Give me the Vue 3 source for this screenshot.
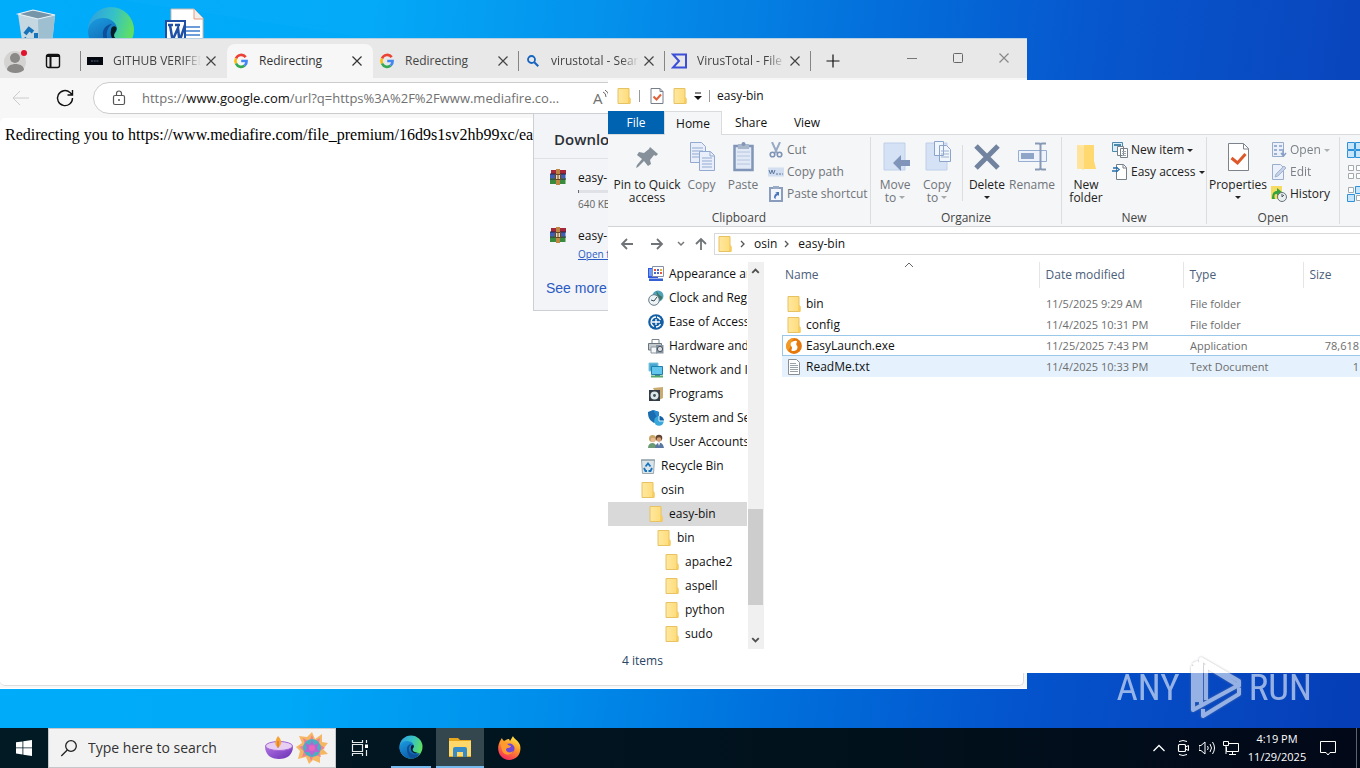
<script setup>
const tabs = [
  { icon: 'dark', title: 'GITHUB VERIFED', fade: true },
  { icon: 'google', title: 'Redirecting', active: true },
  { icon: 'google', title: 'Redirecting' },
  { icon: 'search', title: 'virustotal - Search', fade: true },
  { icon: 'vt', title: 'VirusTotal - File', fade: true },
]

const tree = [
  { icon: 'appearance', label: 'Appearance and', depth: 1 },
  { icon: 'clock', label: 'Clock and Region', depth: 1 },
  { icon: 'ease', label: 'Ease of Access', depth: 1 },
  { icon: 'hardware', label: 'Hardware and S', depth: 1 },
  { icon: 'network', label: 'Network and Int', depth: 1 },
  { icon: 'programs', label: 'Programs', depth: 1 },
  { icon: 'shield', label: 'System and Sec', depth: 1 },
  { icon: 'users', label: 'User Accounts', depth: 1 },
  { icon: 'recycle', label: 'Recycle Bin', depth: 0 },
  { icon: 'folder', label: 'osin', depth: 0 },
  { icon: 'folder', label: 'easy-bin', depth: 1, selected: true },
  { icon: 'folder', label: 'bin', depth: 2 },
  { icon: 'folder', label: 'apache2', depth: 3 },
  { icon: 'folder', label: 'aspell', depth: 3 },
  { icon: 'folder', label: 'python', depth: 3 },
  { icon: 'folder', label: 'sudo', depth: 3 },
]

const files = [
  { icon: 'folder', name: 'bin', date: '11/5/2025 9:29 AM', type: 'File folder', size: '' },
  { icon: 'folder', name: 'config', date: '11/4/2025 10:31 PM', type: 'File folder', size: '' },
  { icon: 'exe', name: 'EasyLaunch.exe', date: '11/25/2025 7:43 PM', type: 'Application', size: '78,618', state: 'focused' },
  { icon: 'txt', name: 'ReadMe.txt', date: '11/4/2025 10:33 PM', type: 'Text Document', size: '1', state: 'hovered' },
]
</script>

<template>
  <svg class="defs" aria-hidden="true">
    <defs>
      <linearGradient id="gFolder" x1="0" x2="1"><stop offset="0" stop-color="#ffe8a0" /><stop offset="1" stop-color="#ffdb76" /></linearGradient>
      <linearGradient id="gEdgeTop" x1="0" x2="1" y1="0.2" y2="0.5"><stop offset="0" stop-color="#2f9fe0" /><stop offset="0.5" stop-color="#35c1c8" /><stop offset="1" stop-color="#62e25c" /></linearGradient>
      <linearGradient id="gEdgeLow" x1="0" x2="0.6" y1="0" y2="1"><stop offset="0" stop-color="#1b9de2" /><stop offset="1" stop-color="#0c59a4" /></linearGradient>
      <linearGradient id="gFox" x1="0.8" x2="0.3" y1="0" y2="1"><stop offset="0" stop-color="#fff04a" /><stop offset="0.45" stop-color="#ff9528" /><stop offset="1" stop-color="#f6265e" /></linearGradient>
      <linearGradient id="gBowl" x1="0" x2="1" y1="0" y2="1"><stop offset="0" stop-color="#b77be8" /><stop offset="1" stop-color="#6a2fb4" /></linearGradient>

      <symbol id="folder" viewBox="0 0 16 16"><path d="M2 .5h11v9.500h1V15.500H2z" fill="url(#gFolder)" stroke="#e7c262" /><path d="M12.500 9.500 14.500 11v4.500H12z" fill="#f7cc5c" /></symbol>
      <symbol id="doccheck" viewBox="0 0 16 16"><path d="M2 .5h9l3 3v12H2z" fill="#fff" stroke="#767e8a" /><path d="M11 .5v3h3" fill="none" stroke="#767e8a" /><path d="m4.500 8.500 3 3 4.500-5" fill="none" stroke="#e0603a" stroke-width="2" /></symbol>
      <symbol id="google" viewBox="0 0 16 16"><g fill="none" stroke-width="2.600"><path d="M12.700 4.100A5.600 5.600 0 0 0 3 5.500" stroke="#ea4335" /><path d="M3 5.500a5.600 5.600 0 0 0 0 5" stroke="#fbbc05" /><path d="M3 10.500a5.600 5.600 0 0 0 8.700 2" stroke="#34a853" /><path d="M8.200 8h5.400a5.600 5.600 0 0 1-1.900 4.500" stroke="#4285f4" /></g></symbol>
      <symbol id="dark" viewBox="0 0 16 16"><rect y="4" width="16" height="8" fill="#05080e" /><path d="M4 8h8" stroke="#3d4960" stroke-width="1.500" stroke-dasharray="2 .7" /></symbol>
      <symbol id="search" viewBox="0 0 16 16"><circle cx="6.500" cy="6.500" r="3.500" fill="none" stroke="#1764c0" stroke-width="1.800" /><path d="m9.300 9.300 4 4" stroke="#1764c0" stroke-width="2" /></symbol>
      <symbol id="vt" viewBox="0 0 16 16"><path d="M2 1.500h13v13H2L8 8z" fill="none" stroke="#3b4fd8" stroke-width="2" /></symbol>
      <symbol id="x" viewBox="0 0 16 16"><path d="m3.500 3.500 9 9m0-9-9 9" stroke="currentColor" stroke-width="1.200" fill="none" /></symbol>
      <symbol id="plus" viewBox="0 0 16 16"><path d="M8 1.500v13M1.500 8h13" stroke="currentColor" stroke-width="1.200" fill="none" /></symbol>
      <symbol id="rar" viewBox="0 0 18 18"><path d="M2 2h15v4H2z" fill="#a5283a" /><path d="M1 6h15.500v4.500H1z" fill="#3f5fb4" /><path d="M1 10.500h15.500V16H1z" fill="#398a3c" /><path d="M1 6h16M1 11h16" stroke="#252744" /><path d="M7 1h4v16H7z" fill="#bd8642" /><path d="M6.500 6.500h5v5h-5z" fill="#ead9b4" stroke="#6a4420" /><path d="M9 7v4" stroke="#6a4420" /></symbol>
      <symbol id="appearance" viewBox="0 0 16 16"><path d="M0 2h10v10H0z" fill="#3156df" /><path d="M1 3h5v7H1z" fill="#6f9bf2" /><path d="M4.500.500h11v10h-11z" fill="#fff" stroke="#8791a5" /><path d="M6 3h2v2H6zm6 3h2v2h-2z" fill="#ee5437" /><path d="M9 3h2v2H9zM6 6h2v2H6zm3 0h2v2H9z" fill="#4568cf" /><path d="M12 3h2v2h-2z" fill="#e7b529" /><path d="M1 12.500h14V15H1z" fill="#345fd5" /></symbol>
      <symbol id="clock" viewBox="0 0 16 16"><circle cx="10" cy="6" r="5.500" fill="#4fa3b8" /><path d="M8 1c3 2 2 4 5 5s0 4-2 5" fill="#3f7564" /><circle cx="6" cy="10" r="5.300" fill="#edf2f4" stroke="#667b89" /><path d="m3 10 3 1 3-4" fill="none" stroke="#334956" /></symbol>
      <symbol id="ease" viewBox="0 0 16 16"><circle cx="8" cy="8" r="7.800" fill="#125fa6" /><path d="M8 3a5 5 0 0 0-2 9.500M9 3a5 5 0 0 1 3.500 3M8 13a5 5 0 0 0 4.500-3M4 8h8M8 5v6" fill="none" stroke="#fff" stroke-width="1.300" /></symbol>
      <symbol id="hardware" viewBox="0 0 16 16"><path d="M4 1.500h7v4H4z" fill="#fff" stroke="#79838d" /><path d="M.5 5.500h13V12H.5z" fill="#c4cbd0" stroke="#69747f" /><path d="M3 9h6v6H3z" fill="#f5f7f8" stroke="#8b959e" /><path d="M8 7h7.500v8.500H8z" fill="#8894a0" /><circle cx="12" cy="11" r="2.600" fill="#d9e0e5" stroke="#48535d" /></symbol>
      <symbol id="network" viewBox="0 0 16 16"><path d="M1 1h9v8H1z" fill="#48a8d2" stroke="#7ec7df" /><path d="M3.500 4.500h11v8h-11z" fill="#62c6ec" stroke="#1f7fae" /><path d="M7 12.500h5v1.500H7z" fill="#337799" /><path d="M3 14.500h12" stroke="#55a869" stroke-width="2" /></symbol>
      <symbol id="programs" viewBox="0 0 16 16"><path d="M5 2 15 1v11l-4 2z" fill="#c9aa70" /><path d="M1 4h11v11H1z" fill="#333c45" /><circle cx="6.500" cy="9.500" r="4" fill="#dde6e9" /><circle cx="6.500" cy="9.500" r="1.400" fill="#3c525c" /></symbol>
      <symbol id="shield" viewBox="0 0 16 16"><path d="m0 2 5-2 6 2c0 6-1 8-5 11C1 10 0 7 0 2" fill="#196caf" /><path d="m5 0 6 2c0 4 0 5-1 7z" fill="#2688d0" /><circle cx="11" cy="11" r="4.800" fill="#38a8da" /><path d="M11 6v5h5a5 5 0 0 0-5-5" fill="#1561a3" /><path d="M11 6v5h5" fill="none" stroke="#ddf4ff" /></symbol>
      <symbol id="users" viewBox="0 0 16 16"><circle cx="4.500" cy="4.500" r="3.500" fill="#c8a566" /><circle cx="5" cy="6" r="2.300" fill="#e9bd91" /><path d="M0 14c0-6 8-7 9 0z" fill="#6c9a73" /><circle cx="11" cy="4" r="3.300" fill="#604331" /><circle cx="11" cy="5.500" r="2.300" fill="#d79e75" /><path d="M7 14c1-7 8-7 9 0z" fill="#5a76a3" /><path d="m10 9 1 3 1-3" fill="#fff" /></symbol>
      <symbol id="recycle" viewBox="0 0 16 16"><path d="m1.500 2 1 13.500h11l1-13.500z" fill="#dbe4e8" stroke="#9aa9b2" /><path d="M1 2h14" stroke="#84939c" /><path d="m5.500 8.500 2.500-3 2.500 3M12 10l-1.500 3h-2M4 10l1.500 3H7" fill="none" stroke="#1673bf" stroke-width="1.800" /></symbol>
      <symbol id="exe" viewBox="0 0 16 16"><circle cx="8" cy="8" r="7.900" fill="#e5780c" /><path d="M8 .2a7.800 7.800 0 0 0-6 12.700L5 8l1-5z" fill="#f29a24" /><path d="M9.500 2.800C6 3 4.200 5 4.800 7.300c.3 1.200 1.500 1.600 1.200 2.700-.2 1-.7 2-.3 3 4 .5 6-1.500 5.800-4-.1-1.500-1.300-1.700-1.200-2.700.1-1.300.6-2 .8-3z" fill="#fff" /></symbol>
      <symbol id="txt" viewBox="0 0 16 16"><path d="M2.500.500h8l3 3v12h-11z" fill="#fff" stroke="#8b8f94" /><path d="M4 4.500h6M4 6.500h8M4 8.500h8M4 10.500h8M4 12.500h8" stroke="#9aa2a9" /></symbol>
      <symbol id="edge" viewBox="0 0 48 48"><circle cx="24" cy="24" r="23" fill="url(#gEdgeTop)" /><path d="M1 25C2 16 9 12 16 12c9 0 14 6 14 11 0 3-3 4-3 7 0 5 7 8 15 6-4 7-11 11-18 11C11 47 1 37 1 25" fill="url(#gEdgeLow)" /><path d="M16 29c-1-6 4-11 9-11-4 3-6 8-5 13s8 11 21 8c-4 5-9 8-15 8-6-3-10-11-10-18" fill="#0d4f9b" /><path d="M24 24c0-3 3-5 5-3 2 3-2 5-2 9 1 4 7 5 11 5-8 4-16-2-14-11" fill="#041c24" /></symbol>
    </defs>
  </svg>

  <main class="desktop">
    <svg class="wall" viewBox="0 0 1360 768" preserveAspectRatio="none" aria-hidden="true">
      <path d="M120 0 1360 190V0z" fill="#fff" opacity=".015" />
    </svg>
    <div class="shortcuts">
      <svg class="desk-icon" viewBox="0 0 48 48" aria-label="Recycle Bin"><path d="M6 8 21 4l22 5-4 39H12z" fill="#c5d8e2" /><path d="m26 13 17-4-4 39H27z" fill="#9dbfd0" /><path d="M6 8 21 4l22 5-17 4z" fill="#7695a8" stroke="#e8f1f6" stroke-width="1.200" /><path d="m13 28 4-5 4 3m3 1 0 6m-8 4-4-5" fill="none" stroke="#1673ba" stroke-width="4" /></svg>
      <svg class="desk-icon" aria-label="Edge"><use href="#edge" /></svg>
      <svg class="desk-icon" viewBox="0 0 48 48" aria-label="Word"><path d="M9 3h23l9 9v36H9z" fill="#fff" stroke="#c9b9b3" /><path d="M32 3v10h9" fill="#eee" stroke="#e89a7b" /><path d="M24 21h14M24 25h14M24 29h14" stroke="#3d7dcb" stroke-width="1.500" /><path d="M4 15h19v26H4z" fill="#fff" stroke="#1e50a6" stroke-width="2" /><path d="m8 19 2 12h2l4-9 1 9h2l4-12M6 19h5m2 0h5" fill="none" stroke="#1e50a6" stroke-width="2.500" /></svg>
    </div>

    <section class="browser" aria-label="Browser">
      <div class="tabbar">
        <div class="profile">
          <svg viewBox="0 0 30 30"><circle cx="15" cy="16" r="11" fill="#d5d3d2" /><circle cx="15" cy="12" r="5" fill="#8b8988" /><path d="M7 24c0-8 17-8 17 0-4 4-13 4-17 0" fill="#8b8988" /><circle cx="24" cy="7" r="3" fill="#e3122d" /></svg>
        </div>
        <svg class="tabmenu" viewBox="0 0 16 16"><rect x="1.500" y="1.500" width="13" height="13" rx="2" fill="none" stroke="#111" stroke-width="1.400" /><path d="M2 3h12M5.500 3v11" stroke="#111" stroke-width="2" /></svg>
        <div v-for="(t, i) in tabs" :key="i" class="tab" :class="{ active: t.active, fade: t.fade, before: i === 0 }">
          <svg class="fav"><use :href="'#' + t.icon" /></svg>
          <span>{{ t.title }}</span>
          <button aria-label="Close tab"><svg><use href="#x" /></svg></button>
        </div>
        <button class="newtab" aria-label="New tab"><svg><use href="#plus" /></svg></button>
        <div class="winctl">
          <button aria-label="Minimize"><svg viewBox="0 0 16 16"><path d="M3 8.500h10" stroke="#777" /></svg></button>
          <button aria-label="Maximize"><svg viewBox="0 0 16 16"><rect x="3.500" y="3.500" width="9" height="9" rx="1" fill="none" stroke="#666" /></svg></button>
          <button aria-label="Close"><svg><use href="#x" /></svg></button>
        </div>
      </div>
      <div class="toolbar">
        <button class="back" aria-label="Back"><svg viewBox="0 0 20 20"><path d="M18 10H2m7-7-7 7 7 7" fill="none" stroke="currentColor" /></svg></button>
        <button class="reload" aria-label="Refresh"><svg viewBox="0 0 20 20"><path d="M17.500 10A7.500 7.500 0 1 1 15 4.500L17 6.500M17.500 2v5h-5" fill="none" stroke="currentColor" stroke-width="1.400" /></svg></button>
        <div class="address">
          <svg class="lock" viewBox="0 0 16 16"><rect x="2.500" y="5.500" width="11" height="9" rx="1.500" fill="none" stroke="#555" stroke-width="1.200" /><path d="M5.500 5V3.500a2.500 2.500 0 0 1 5 0V5" fill="none" stroke="#555" stroke-width="1.200" /><circle cx="8" cy="10" r="1" fill="#555" /></svg>
          <p>https://<b>www.google.com</b>/url?q=https%3A%2F%2Fwww.mediafire.co...</p>
          <span class="aloud">A<svg viewBox="0 0 8 10"><path d="M0 2q3 1 3 5M2 0q4 2 4 7" fill="none" stroke="#666" /></svg></span>
        </div>
      </div>
      <div class="page">Redirecting you to https://www.mediafire.com/file_premium/16d9s1sv2hb99xc/ea</div>
      <aside class="downloads">
        <h2>Downloads</h2>
        <div class="dl"><svg><use href="#rar" /></svg><div><p>easy-</p><i class="bar"></i><small>640 KB</small></div></div>
        <div class="dl"><svg><use href="#rar" /></svg><div><p>easy-</p><a href="#">Open file</a></div></div>
        <a class="more" href="#">See more</a>
      </aside>
    </section>

    <section class="explorer" aria-label="easy-bin">
      <header class="titlebar">
        <svg class="i16"><use href="#folder" /></svg><i class="sep"></i>
        <svg class="i16"><use href="#doccheck" /></svg><svg class="i16 qa"><use href="#folder" /></svg>
        <svg class="drop" viewBox="0 0 8 8"><path d="M1 1h6" stroke="#111" /><path d="M0 4h8L4 8z" fill="#111" /></svg><i class="sep tight"></i>
        <span>easy-bin</span>
      </header>
      <nav class="rtabs">
        <button class="file">File</button><button class="home">Home</button><button class="share">Share</button><button class="view">View</button>
      </nav>
      <div class="ribbon">
        <div class="group clip">
          <div class="tools">
            <button class="big pin"><svg viewBox="0 0 32 32"><path d="m19 6 8 7-2 2-2-1-4 5 1 4-3 2-4-5-6 6-2 1 1-3 5-6-5-4 2-3 5 1 5-4z" fill="#85909a" /></svg>Pin to Quick<br>access</button>
            <button class="big off copy"><svg viewBox="0 0 32 32"><g fill="#e8effb" stroke="#93a9cf"><path d="M4.500 1.500h11l4 4v16h-15z" /><path d="M6 7h11M6 10h11M6 13h11M6 16h11" /><path d="M13.500 10.500h11l4 4v15h-15z" /><path d="M24 11v4h4M16 17h10M16 20h10M16 23h10M16 26h10" /></g></svg>Copy</button>
            <button class="big off paste"><svg viewBox="0 0 32 32"><path d="M7.500 5h18v24h-18z" fill="#e2e9f6" stroke="#8195b8" stroke-width="2.500" /><path d="M10 11h13M10 15h13M10 19h13M10 23h13" stroke="#b4c4df" /><path d="M11 3h11v5H11z" fill="#a8b6cc" /><circle cx="16.500" cy="3" r="2" fill="#8195b8" /></svg>Paste</button>
            <div class="small off">
              <button><svg viewBox="0 0 16 16"><path d="m4 0 5 11M12 0 7 11" stroke="#97a9c4" stroke-width="2" /><g fill="none" stroke="#7f94b5" stroke-width="1.600"><circle cx="4.500" cy="12.500" r="2.300" /><circle cx="11.500" cy="12.500" r="2.300" /></g></svg>Cut</button>
              <button><svg viewBox="0 0 16 16"><path d="M0 3.500h16v9H0z" fill="#d3dff1" /><path d="m1 6 1.500 4L4 6l1.500 4L7 6" fill="none" stroke="#5b789f" /><path d="M8 10h7" stroke="#5b789f" stroke-dasharray="2 1" /></svg>Copy path</button>
              <button><svg viewBox="0 0 16 16"><path d="M2 2h12v13H2z" fill="#f3f7fd" stroke="#8a9dbd" stroke-width="2" /><path d="M5 0h6v3H5z" fill="#9aabc6" /><path d="M6 12c0-3 1-4 3-5L7 6h4v4l-1-1c-2 1-3 2-2 4z" fill="#4776ba" /></svg>Paste shortcut</button>
            </div>
          </div>
          <p>Clipboard</p>
        </div>
        <div class="group org">
          <div class="tools">
            <button class="big off move"><svg viewBox="0 0 32 32"><path d="M5 2h21v27H5z" fill="#d5e1f5" stroke="#c0d0ea" /><path d="M31 19h-9v-5l-8 8 8 8v-5h9z" fill="#8095b9" /></svg>Move<br>to <i></i></button>
            <button class="big off dup"><svg viewBox="0 0 32 32"><path d="M5 2h21v27H5z" fill="#d5e1f5" stroke="#c0d0ea" /><path d="M13.500.5h9v14h-9zM18.500 4.500h7l4 4v12h-11z" fill="#f1f5fc" stroke="#8ca4ca" /><path d="M20 10h8M20 13h8M20 16h8" stroke="#9db1d2" /></svg>Copy<br>to <i></i></button>
            <u></u>
            <button class="big del"><svg viewBox="0 0 32 32"><path d="m5 5 22 22m0-22L5 27" stroke="#71839e" stroke-width="5" /></svg>Delete<br><i></i></button>
            <button class="big off ren"><svg viewBox="0 0 32 32"><path d="M2.500 9.500h28v11h-28z" fill="#eef3fb" stroke="#97aed3" /><path d="M5 12h13v6H5z" fill="#8fa5c8" /><path d="M24.500 3v25M19 2.500h4q1.500 0 1.500 2 0-2 1.500-2h4M19 28.500h4q1.500 0 1.500-2 0 2 1.500 2h4" fill="none" stroke="#8799b5" stroke-width="2" /></svg>Rename</button>
          </div>
          <p>Organize</p>
        </div>
        <div class="group new">
          <div class="tools">
            <button class="big fold"><svg viewBox="0 0 32 32"><path d="M7 4h14v24H7z" fill="#ffe7a1" /><path d="M14 4h10v16l2 8H14z" fill="#ffd86f" /><path d="m7 4 7 3v22l-7-3z" fill="#ffe39a" /></svg>New<br>folder</button>
            <div class="small">
              <button><svg viewBox="0 0 16 16"><path d="M.5.500h10v9H.500z" fill="#dceefb" stroke="#4b89af" /><path d="M2 3h7" stroke="#4b89af" stroke-width="2" /><path d="M5.500 4.500h6v9h-6zM8.500 6.500h7v9h-7z" fill="#fff" stroke="#777f87" /><path d="M10 9.500h4M10 11.500h4M10 13.500h4" stroke="#9da4aa" /></svg>New item<i></i></button>
              <button><svg viewBox="0 0 16 16"><path d="M4.500.500h7l3 3v12h-10z" fill="#fff" stroke="#777f87" /><path d="M11 .5v3.500h3.500" fill="none" stroke="#777f87" /><path d="M1 4h5M0 7h6M4 3l3 2.500L4 8" stroke="#2770ab" fill="none" stroke-width="1.500" /></svg>Easy access<i></i></button>
            </div>
          </div>
          <p>New</p>
        </div>
        <div class="group open">
          <div class="tools">
            <button class="big"><svg viewBox="0 0 32 32"><path d="M6.500 2.500h15l5 5v22h-20z" fill="#fff" stroke="#7c838b" /><path d="M21.500 3v5h5" fill="none" stroke="#7c838b" /><path d="m9.500 17 6 5 8-9" fill="none" stroke="#dd592c" stroke-width="3" /></svg>Properties<br><i></i></button>
            <div class="small">
              <button class="off"><svg viewBox="0 0 16 16"><path d="M1.500.500h11v14h-11z" fill="#eaf0fb" stroke="#8fa4c8" /><path d="M3 3h3v2H3zm0 4h3v2H3zm0 4h3v2H3z" fill="#93a9cd" /><path d="M8 4h3M8 8h3M12 7v6M10 11l2.500 3L15 11" stroke="#7e96c1" stroke-width="1.500" fill="none" /></svg>Open<i></i></button>
              <button class="off"><svg viewBox="0 0 16 16"><path d="M1.500.500h8l3 3v12h-11z" fill="#eaf0fb" stroke="#91a6c9" /><path d="m4 13 1-3 8-8 2 2-8 8z" fill="#bfcee6" stroke="#9cafcf" /></svg>Edit</button>
              <button><svg viewBox="0 0 16 16"><path d="M0 0h11v13H0z" fill="#f6db62" /><path d="M1 13c0-6 2-8 5-8V2l5 4-5 4V8c-3 0-3 2-2 5z" fill="#36a43c" /><circle cx="11" cy="11" r="4.500" fill="#e9eeef" stroke="#66727a" /><path d="M11 8v3l2-2" stroke="#4b5960" fill="none" /></svg>History</button>
            </div>
          </div>
          <p>Open</p>
        </div>
        <div class="group select">
          <svg viewBox="0 0 16 16"><path d="M.5.500h7v7h-7zm8 0h7v7h-7zm-8 8h7v7h-7zm8 0h7v7h-7z" fill="#c7e6fc" stroke="#2f91d8" /></svg>
          <svg viewBox="0 0 16 16"><path d="M1.500 1.500h5v5h-5zm8 0h5v5h-5zm-8 8h5v5h-5zm8 0h5v5h-5z" fill="#fff" stroke="#a4a9ad" /></svg>
          <svg viewBox="0 0 16 16"><path d="M1.500 1.500h5v5h-5zm8 8h5v5h-5z" fill="#fff" stroke="#a4a9ad" /><path d="M8.500.500h7v7h-7zm-8 8h7v7h-7z" fill="#c7e6fc" stroke="#2f91d8" /></svg>
        </div>
      </div>
      <div class="navrow">
        <button aria-label="Back"><svg viewBox="0 0 16 16"><path d="M14 8H3m5-5L3 8l5 5" fill="none" stroke="#707478" stroke-width="1.800" /></svg></button>
        <button aria-label="Forward"><svg viewBox="0 0 16 16"><path d="M2 8h11M8 3l5 5-5 5" fill="none" stroke="#707478" stroke-width="1.800" /></svg></button>
        <button class="recent" aria-label="Recent"><svg viewBox="0 0 16 16"><path d="m5 6 3 3 3-3" fill="none" stroke="#777" stroke-width="1.500" /></svg></button>
        <button class="up" aria-label="Up"><svg viewBox="0 0 16 16"><path d="M8 14V3M3 8l5-5 5 5" fill="none" stroke="#707478" stroke-width="1.800" /></svg></button>
        <div class="crumbs">
          <svg class="i16"><use href="#folder" /></svg>
          <svg class="chev" viewBox="0 0 8 8"><path d="m2 1 3 3-3 3" fill="none" stroke="#555" stroke-width="1.300" /></svg><span>osin</span>
          <svg class="chev" viewBox="0 0 8 8"><path d="m2 1 3 3-3 3" fill="none" stroke="#555" stroke-width="1.300" /></svg><span>easy-bin</span>
        </div>
      </div>
      <div class="body">
        <ul class="tree">
          <li v-for="n in tree" :key="n.label" :class="['d' + n.depth, { selected: n.selected }]"><svg class="i16"><use :href="'#' + n.icon" /></svg><span>{{ n.label }}</span></li>
        </ul>
        <div class="scroll">
          <svg viewBox="0 0 16 16"><path d="m4.500 10 3.500-3.500L11.500 10" fill="none" stroke="#505050" stroke-width="2" /></svg>
          <i></i>
          <svg viewBox="0 0 16 16"><path d="m4.500 6 3.500 3.500L11.500 6" fill="none" stroke="#505050" stroke-width="2" /></svg>
        </div>
        <div class="list">
          <table>
            <thead><tr><th class="cname">Name<svg viewBox="0 0 10 6"><path d="m1 5 4-4 4 4" fill="none" stroke="#666" /></svg></th><th class="cdate">Date modified</th><th class="ctype">Type</th><th>Size</th></tr></thead>
            <tbody>
              <tr v-for="f in files" :key="f.name" :class="f.state">
                <td class="name"><div><svg class="i16"><use :href="'#' + f.icon" /></svg>{{ f.name }}</div></td>
                <td>{{ f.date }}</td><td>{{ f.type }}</td><td class="size">{{ f.size }}</td>
              </tr>
            </tbody>
          </table>
        </div>
      </div>
      <footer class="status">4 items</footer>
    </section>

    <div class="mark">
      <span>ANY</span>
      <svg viewBox="0 0 56 64"><path d="M5 10v44L49 30M5 9l4-2v39M13 48V3l38 22v5L18 10v34M15 53v7l36-22v-6" fill="none" stroke="currentColor" stroke-width="4" stroke-linejoin="round" /></svg>
      <span>RUN</span>
    </div>

    <footer class="taskbar">
      <button class="start" aria-label="Start"><svg viewBox="0 0 16 16"><path d="M0 2.300 6.500 1.400v6.100H0zM7.300 1.300 16 0v7.500H7.300zM0 8.300h6.500v6.200L0 13.600zM7.300 8.300H16V16l-8.700-1.200z" fill="#fff" /></svg></button>
      <label class="find">
        <svg class="glass" viewBox="0 0 18 18"><circle cx="11" cy="7" r="5.300" fill="none" stroke="#222" stroke-width="1.300" /><path d="m7.300 11-6 6" stroke="#222" stroke-width="1.300" /></svg>
        <input type="text" placeholder="Type here to search" aria-label="Type here to search">
        <svg class="diya" viewBox="0 0 30 26"><path d="M1 11q14-6 28 0c0 9-6 13-14 13S1 20 1 11" fill="url(#gBowl)" /><ellipse cx="15" cy="11" rx="13.500" ry="4.500" fill="#e7cff4" stroke="#a565d6" /><path d="M14 1c6 6 2 11 0 11s-5-4 0-11" fill="#f6a336" /><path d="M14 6v7" stroke="#d06d28" /></svg>
        <svg class="flower" viewBox="0 0 32 32"><path d="m16 0 3 7 7-5 0 8 6 1-5 6 5 5-8 1 0 8-7-3-4 4-3-7-8 2 2-8-4-4 6-4-3-7 8 1z" fill="#f6b765" /><path d="m16 3 2 6 6-3-1 6 6 4-6 3 2 6-7-2-3 6-2-6-7 2 2-6-5-4 6-2-2-7 6 3z" fill="#ee8292" /><circle cx="16" cy="16" r="9" fill="#4bafc2" /><path d="m16 8 2 5 5-2-2 5 3 4-5 0-3 4-3-4-5 0 3-4-2-5 5 2z" fill="#b566d2" /><circle cx="16" cy="16" r="3" fill="#e765bb" /></svg>
      </label>
      <button class="app" aria-label="Task view"><svg class="tv" viewBox="0 0 18 18"><path d="M1.500 1v2.500h10V1M1.500 17v-2.500h10V17M1.500 5.500h10v7h-10zM15.500 1v3M15.500 11v6" fill="none" stroke="#e5e9ea" stroke-width="1.200" /><path d="M14 5.500h3V9h-3z" fill="#fff" /></svg></button>
      <button class="app running" aria-label="Edge"><svg><use href="#edge" /></svg></button>
      <button class="app current" aria-label="File Explorer"><svg viewBox="0 0 24 24"><path d="M1 3h9l2 2h11v17H1z" fill="#e6a61e" /><path d="M1 6h22v15H1z" fill="#ffd869" /><path d="M5 22v-8q0-2 2-2h10q2 0 2 2v8h-4v-5H9v5z" fill="#368ac6" /></svg></button>
      <button class="app" aria-label="Firefox"><svg viewBox="0 0 24 24"><path d="M3 5c1-1 1-2 2-3 0 1 1 2 2 3l2-1c1-1 2-1 3-1l1 2 3-5c0 2 5 4 7 9 2 8-3 15-11 15C4 24-2 15 3 5" fill="url(#gFox)" /><circle cx="12.500" cy="12.500" r="5" fill="#6f48d9" /><path d="M3 6c3-2 7 0 8 3l3 1c-1 3-5 1-5 4 1 3 5 3 7 1-2 5-10 5-11-1" fill="#ff9b2e" /></svg></button>
      <div class="tray">
        <svg viewBox="0 0 16 16"><path d="m2.500 11 5.500-5.500 5.500 5.500" fill="none" stroke="#fff" stroke-width="1.300" /></svg>
        <svg viewBox="0 0 16 16"><rect x="3.500" y="4.500" width="7" height="7" rx="1" fill="none" stroke="#fff" stroke-width="1.200" /><path d="m10.500 7 3-1.500v5l-3-1.500M4 1.500q4-2 8 0M4 14.500q4 2 8 0" fill="none" stroke="#fff" /></svg>
        <svg viewBox="0 0 16 16"><path d="M0 5.500h2L6 2v12l-4-3.500H0zM8.500 6q1.500 2 0 4M11 4q3 4 0 8M13.500 2q4 6 0 12" fill="none" stroke="#fff" /></svg>
        <svg viewBox="0 0 16 16"><path d="M5 3.500h10.500v8H3.500V7M6 14.500h7M9.500 12v2.500M.500 1.500h5v4h-5zM3 6v8" fill="none" stroke="#fff" /></svg>
        <time>4:19 PM<br>11/29/2025</time>
        <svg class="note" viewBox="0 0 18 18"><path d="M1.500 2.500h15v11H11l-2 2.500-2-2.500H1.500z" fill="none" stroke="#fff" /></svg>
        <i class="peek"></i>
      </div>
    </footer>
  </main>
</template>

<style>
body { margin: 0; }
</style>

<style scoped>
* { box-sizing: border-box; }
.defs { position: absolute; width: 0; height: 0; }
.desktop {
  position: relative; height: 100vh; overflow: hidden;
  font: 12px/16px "Open Sans", "Noto Sans", sans-serif; color: #111;
  background: linear-gradient(97deg, #00adfb 0%, #00a9f8 25%, #0090ec 42%, #006edb 60%, #0454cd 76%, #0647c0 90%, #053db6 100%);
}
.wall { position: absolute; width: 100%; height: 100%; }
button { border: 0; padding: 0; background: none; font: inherit; color: inherit; }
p, h2, ul { margin: 0; padding: 0; list-style: none; font-weight: 400; }
.i16 { width: 16px; height: 16px; flex: none; }
.shortcuts { position: absolute; top: 6px; left: 12px; display: flex; gap: 27px; }
.desk-icon { width: 48px; height: 48px; }

.browser { position: absolute; left: 0; top: 38px; bottom: 79px; width: 1027px; display: flex; flex-direction: column; background: #f7f7f7; border-bottom: 1px solid #fff; }
.tabbar { height: 40px; flex: none; display: flex; align-items: center; background: #e8e8e8; border-top: 1px solid #b9cfe2; padding-top: 5px; }
.profile { width: 45px; height: 30px; }
.profile svg { width: 30px; height: 30px; display: block; }
.tabmenu { width: 16px; height: 16px; margin-right: 20px; }
.tab { position: relative; width: 146px; height: 35px; display: flex; align-items: center; padding: 0 7px 0 6px; border-right: 1px solid transparent; color: #444; }
.tab::after { content: ""; position: absolute; right: -1px; top: 7px; height: 20px; border-right: 1px solid #858585; }
.tab.active::after, .tab.before::after { display: none; }
.tab.before::before { content: ""; position: absolute; left: -1px; top: 7px; height: 20px; border-left: 1px solid #858585; }
.tab.active { background: #f7f7f7; border-radius: 8px 8px 0 0; color: #333; }
.tab .fav { width: 16px; height: 16px; margin-right: 10px; flex: none; }
.tab span { flex: 1; min-width: 0; overflow: hidden; white-space: nowrap; }
.tab.fade span { mask-image: linear-gradient(90deg, #000 80%, transparent); }
.tab button { width: 16px; height: 16px; margin-left: 2px; }
.tab svg, .newtab svg, .winctl svg { display: block; }
.tab button svg, .newtab svg, .winctl svg { width: 16px; height: 16px; }
.newtab { margin-left: 14px; }
.winctl { display: flex; margin-left: auto; color: #888; padding-bottom: 6px; }
.winctl button { width: 46px; display: flex; justify-content: center; }
.toolbar { height: 40px; flex: none; display: flex; align-items: center; padding-left: 11px; }
.back { color: #ccc; }
.back svg, .reload svg { width: 20px; height: 20px; display: block; }
.reload { margin: 0 18px 0 24px; }
.address { flex: 1; height: 32px; display: flex; align-items: center; background: #fff; border: 1px solid #ccc; border-radius: 16px 0 0 16px; padding-left: 17px; font-size: 13px; color: #707070; white-space: nowrap; }
.lock { width: 16px; height: 16px; margin-right: 15px; }
.address p { width: 451px; }
.address b { font-weight: 400; color: #111; }
.aloud { font-size: 15px; display: flex; }
.aloud svg { width: 8px; height: 10px; }
.page { flex: 1; margin-right: 3px; margin-bottom: 2px; background: #fff; border: 1px solid #ddd; border-width: 0 1px 1px 0; border-radius: 5px; padding: 8px 5px; font: 16px/18px "Liberation Serif", "Times New Roman", serif; color: #000; white-space: nowrap; }
.downloads { position: absolute; left: 533px; top: 75px; width: 360px; background: #f3f4f7; border: 1px solid #ccd0d6; padding: 12px 0 12px; }
.downloads h2 { font-size: 15px; line-height: 26px; font-weight: 600; color: #2b2f36; padding: 0 20px 6px; border-bottom: 1px solid #dfe1e5; }
.dl { display: flex; height: 58px; padding: 9px 0 0 15px; gap: 11px; }
.dl svg { width: 18px; height: 18px; }
.dl p { line-height: 20px; }
.dl small { display: block; font-size: 10px; line-height: 14px; color: #626262; }
.dl a { font-size: 10px; line-height: 16px; display: block; color: #2a5bc4; }
.bar { display: block; width: 240px; height: 3px; margin: 2px 0 4px; background: #dfe1e6; border-left: 1px solid #667; }
.more { display: block; font: 14px/20px "Liberation Sans", Arial, sans-serif; color: #2a5bc4; text-decoration: none; padding: 3px 12px 0; }

.explorer { position: absolute; left: 608px; right: 0; top: 80px; bottom: 95px; background: #fff; display: flex; flex-direction: column; overflow: hidden; }
.titlebar { height: 31px; flex: none; display: flex; align-items: center; padding-left: 8px; }
.sep { height: 12px; border-left: 1px solid #999; margin: 0 9px 0 7px; }
.sep.tight { margin: 0 7px; }
.qa { margin: 0 6px 0 7px; }
.drop { width: 8px; height: 8px; }
.rtabs { height: 24px; flex: none; display: flex; border-bottom: 1px solid #dadbdc; line-height: 23px; }
.file { width: 56px; height: 23px; background: #0063b1; color: #fff; }
.home { width: 58px; height: 24px; background: #f5f6f7; border: 1px solid #dadbdc; border-bottom: 0; }
.share { width: 58px; }
.view { width: 54px; }
.ribbon { height: 92px; flex: none; display: flex; background: #f5f6f7; border-bottom: 1px solid #d2d3d4; color: #222; }
.group { flex: none; display: flex; flex-direction: column; margin: 2px 0; border-right: 1px solid #dcdddf; white-space: nowrap; }
.group > p { text-align: center; line-height: 18px; color: #444; }
.tools { height: 71px; flex: none; margin-bottom: -1px; display: flex; }
.group > p { padding-top: 2px; }
.clip { width: 263px; } .org { width: 191px; } .new { width: 145px; } .open { width: 133px; }
.big { width: 42px; display: flow-root; text-align: center; line-height: 13px; padding-top: 4px; align-self: flex-start; }
.big svg { display: block; width: 32px; height: 32px; margin: 0 auto 5px; }
.off { color: #6f747a; }
.pin { width: 72px; margin-left: 3px; } .copy { width: 37px; } .paste { width: 46px; }
.move { width: 46px; margin-left: 1px; } .dup { width: 38px; } .del { width: 44px; } .ren { width: 45px; } .fold { width: 48px; }
.org u { height: 56px; border-left: 1px solid #dcdddf; margin: 8px 2px 0 6px; }
.open .big { width: 62px; }
.ribbon button i { display: inline-block; border: 3px solid transparent; border-top-color: currentColor; border-bottom: 0; vertical-align: 3px; }
.small { display: flex; flex-direction: column; padding: 2px 0 0 2px; }
.small button { height: 22px; display: flex; align-items: center; gap: 3px; }
.small svg { width: 16px; height: 16px; }
.small button.off, .off i { opacity: .9; }
.off i { opacity: .6; }
.group.select { border: 0; gap: 6px; padding: 5px 0 0 7px; }
.select svg { width: 16px; height: 16px; display: block; }
.navrow { height: 35px; flex: none; display: flex; align-items: center; padding: 0 0 2px 11px; }
.navrow button { width: 16px; height: 16px; margin-right: 14px; }
.navrow button svg { display: block; width: 16px; height: 16px; }
.navrow .recent { margin: 0 4px 0 -6px; }
.navrow .up { margin-right: 5px; }
.crumbs { flex: 1; height: 22px; border: 1px solid #d9d9d9; border-right: 0; display: flex; align-items: center; padding-left: 2px; }
.chev { width: 8px; height: 8px; margin: 0 7px 0 6px; }
.body { flex: 1; display: flex; min-height: 0; }
.tree { width: 139px; overflow: hidden; white-space: nowrap; }
.tree li { height: 24px; display: flex; align-items: center; gap: 5px; }
.tree .d0 { padding-left: 32px; } .tree .d1 { padding-left: 40px; } .tree .d2 { padding-left: 48px; } .tree .d3 { padding-left: 56px; }
.tree .selected { background: #d9d9d9; }
.scroll { width: 16px; margin-left: 1px; background: #f0f0f0; display: flex; flex-direction: column; justify-content: space-between; align-items: flex-start; }
.scroll svg { width: 15px; height: 18px; }
.scroll i { width: 15px; height: 96px; background: #cdcdcd; margin-top: 202px; }
.list { flex: 1; min-width: 0; padding-left: 18px; }
table { width: 100%; table-layout: fixed; border-collapse: collapse; white-space: nowrap; }
th { height: 26px; padding: 0 0 0 6px; text-align: left; font-weight: 400; color: #4c607a; border-right: 1px solid #e5e5e5; position: relative; }
th:last-child { border: 0; }
.cname { width: 257px; padding-left: 3px; } .cdate { width: 144px; } .ctype { width: 120px; }
.cname svg { position: absolute; left: 122px; top: 0; width: 10px; height: 6px; }
thead::after { content: ""; display: block; height: 5px; }
td { height: 21px; padding: 0 0 0 7px; color: #6d6d6d; font-size: 11px; }
td.name { padding-left: 4px; color: #111; font-size: 12px; }
.name div { display: flex; gap: 4px; align-items: center; }
td.size { text-align: right; padding: 0 1px 0 0; }
.focused td { box-shadow: inset 0 1px #99c8ea, inset 0 -1px #99c8ea; }
.focused td:first-child { box-shadow: inset 0 1px #99c8ea, inset 0 -1px #99c8ea, inset 1px 0 #99c8ea; }
.hovered { background: #e5f2fd; }
.status { height: 24px; flex: none; padding-left: 14px; line-height: 24px; color: #2a4563; }

.mark { position: absolute; right: 48px; bottom: 48px; display: flex; align-items: center; color: #fff; opacity: .58; font: 37px/64px "Liberation Sans Narrow", "Roboto Condensed", "Liberation Sans", sans-serif; }
.mark svg { width: 56px; height: 64px; margin: 0 5px 0 8px; filter: drop-shadow(0 0 1px #889); }

.taskbar { position: absolute; left: 0; right: 0; bottom: 0; height: 40px; display: flex; background: linear-gradient(90deg, #011a24, #01111c 65%, #020818); color: #fff; }
.start { width: 48px; display: flex; align-items: center; justify-content: center; }
.start svg { width: 16px; height: 16px; }
.find { width: 288px; display: flex; align-items: center; background: #f2f2f2; border: 1px solid #c5c8ca; padding-left: 11px; }
.glass { width: 18px; height: 18px; }
.find input { width: 168px; margin-left: 10px; margin-right: 8px; padding: 0; border: 0; background: none; font: 14px/20px "Open Sans", "Noto Sans", sans-serif; color: #333; }
.find input::placeholder { color: #333; opacity: 1; }
.diya { width: 30px; height: 26px; }
.flower { width: 32px; height: 32px; margin-left: 2px; }
.app { width: 48px; margin-right: 1px; display: flex; align-items: center; justify-content: center; }
.app svg { width: 24px; height: 24px; }
.app .tv { width: 18px; height: 18px; }
.app.running { width: 40px; margin: 0 5px 0 6px; border-bottom: 2px solid #76b9ed; }
.current { background: #34464e; border-bottom: 2px solid #76b9ed; }
.tray { margin-left: auto; display: flex; align-items: center; gap: 8px; }
.tray svg { width: 16px; height: 16px; }
.tray time { width: 60px; font-size: 11px; line-height: 18px; text-align: center; white-space: nowrap; }
.tray .note { width: 18px; height: 18px; margin-left: 4px; }
.peek { height: 40px; width: 4px; border-left: 1px solid #59636c; margin-left: 11px; }
</style>
